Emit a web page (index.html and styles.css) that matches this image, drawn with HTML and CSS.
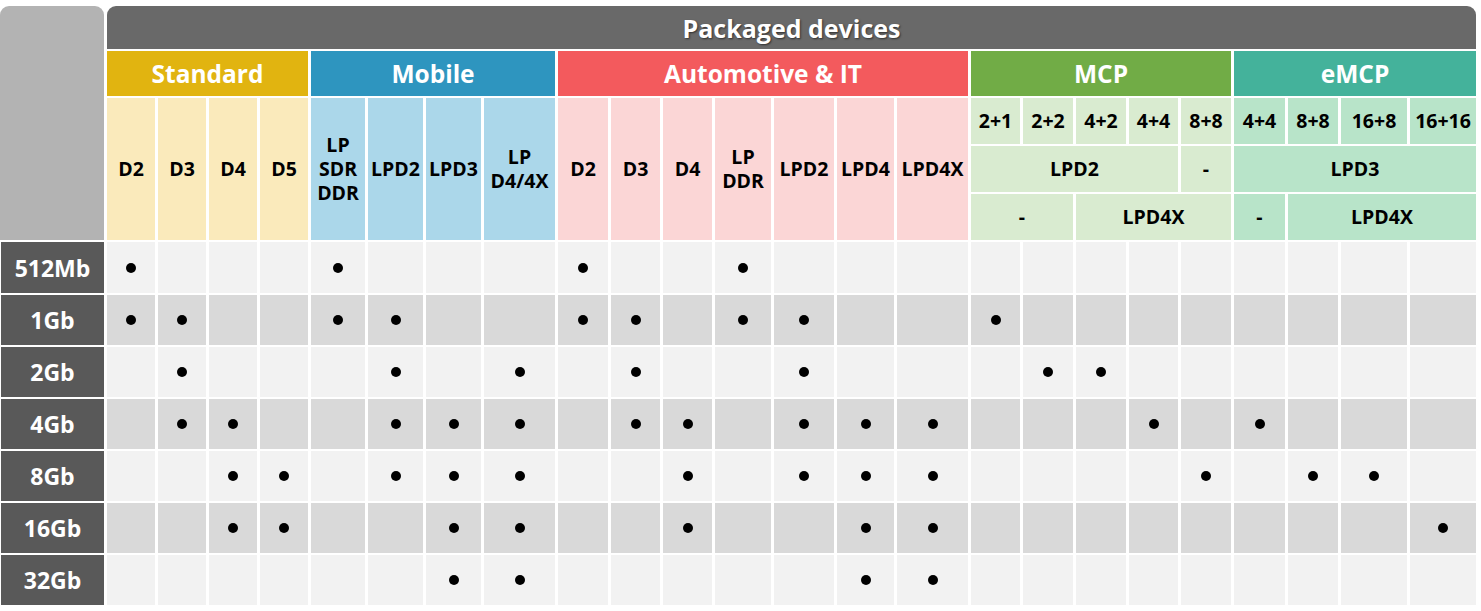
FILE: index.html
```html
<!DOCTYPE html>
<html lang="en">
<head>
<meta charset="utf-8">
<title>Packaged devices</title>
<link rel="stylesheet" href="styles.css">
</head>
<body>
<div class="chart">
  <div class="corner r5"></div>
  <div class="title s24">Packaged devices</div>

  <div class="cat std-h s4">Standard</div>
  <div class="cat mob-h s4">Mobile</div>
  <div class="cat aut-h s7">Automotive &amp; IT</div>
  <div class="cat mcp-h s5">MCP</div>
  <div class="cat emcp-h s4">eMCP</div>

  <div class="sub std r3">D2</div>
  <div class="sub std r3">D3</div>
  <div class="sub std r3">D4</div>
  <div class="sub std r3">D5</div>
  <div class="sub mob r3">LP<br>SDR<br>DDR</div>
  <div class="sub mob r3">LPD2</div>
  <div class="sub mob r3">LPD3</div>
  <div class="sub mob r3">LP<br>D4/4X</div>
  <div class="sub aut r3">D2</div>
  <div class="sub aut r3">D3</div>
  <div class="sub aut r3">D4</div>
  <div class="sub aut r3">LP<br>DDR</div>
  <div class="sub aut r3">LPD2</div>
  <div class="sub aut r3">LPD4</div>
  <div class="sub aut r3">LPD4X</div>
  <div class="sub mcp">2+1</div>
  <div class="sub mcp">2+2</div>
  <div class="sub mcp">4+2</div>
  <div class="sub mcp">4+4</div>
  <div class="sub mcp">8+8</div>
  <div class="sub emcp">4+4</div>
  <div class="sub emcp">8+8</div>
  <div class="sub emcp">16+8</div>
  <div class="sub emcp">16+16</div>

  <div class="sub mcp s4">LPD2</div>
  <div class="sub mcp">-</div>
  <div class="sub emcp s4">LPD3</div>

  <div class="sub mcp s2">-</div>
  <div class="sub mcp s3">LPD4X</div>
  <div class="sub emcp">-</div>
  <div class="sub emcp s3">LPD4X</div>

  <div class="row light">
    <div class="label">512Mb</div>
    <div class="c"><i class="dot"></i></div><div class="c"></div><div class="c"></div><div class="c"></div>
    <div class="c"><i class="dot"></i></div><div class="c"></div><div class="c"></div><div class="c"></div>
    <div class="c"><i class="dot"></i></div><div class="c"></div><div class="c"></div><div class="c"><i class="dot"></i></div><div class="c"></div><div class="c"></div><div class="c"></div>
    <div class="c"></div><div class="c"></div><div class="c"></div><div class="c"></div><div class="c"></div>
    <div class="c"></div><div class="c"></div><div class="c"></div><div class="c"></div>
  </div>

  <div class="row dark">
    <div class="label">1Gb</div>
    <div class="c"><i class="dot"></i></div><div class="c"><i class="dot"></i></div><div class="c"></div><div class="c"></div>
    <div class="c"><i class="dot"></i></div><div class="c"><i class="dot"></i></div><div class="c"></div><div class="c"></div>
    <div class="c"><i class="dot"></i></div><div class="c"><i class="dot"></i></div><div class="c"></div><div class="c"><i class="dot"></i></div><div class="c"><i class="dot"></i></div><div class="c"></div><div class="c"></div>
    <div class="c"><i class="dot"></i></div><div class="c"></div><div class="c"></div><div class="c"></div><div class="c"></div>
    <div class="c"></div><div class="c"></div><div class="c"></div><div class="c"></div>
  </div>

  <div class="row light">
    <div class="label">2Gb</div>
    <div class="c"></div><div class="c"><i class="dot"></i></div><div class="c"></div><div class="c"></div>
    <div class="c"></div><div class="c"><i class="dot"></i></div><div class="c"></div><div class="c"><i class="dot"></i></div>
    <div class="c"></div><div class="c"><i class="dot"></i></div><div class="c"></div><div class="c"></div><div class="c"><i class="dot"></i></div><div class="c"></div><div class="c"></div>
    <div class="c"></div><div class="c"><i class="dot"></i></div><div class="c"><i class="dot"></i></div><div class="c"></div><div class="c"></div>
    <div class="c"></div><div class="c"></div><div class="c"></div><div class="c"></div>
  </div>

  <div class="row dark">
    <div class="label">4Gb</div>
    <div class="c"></div><div class="c"><i class="dot"></i></div><div class="c"><i class="dot"></i></div><div class="c"></div>
    <div class="c"></div><div class="c"><i class="dot"></i></div><div class="c"><i class="dot"></i></div><div class="c"><i class="dot"></i></div>
    <div class="c"></div><div class="c"><i class="dot"></i></div><div class="c"><i class="dot"></i></div><div class="c"></div><div class="c"><i class="dot"></i></div><div class="c"><i class="dot"></i></div><div class="c"><i class="dot"></i></div>
    <div class="c"></div><div class="c"></div><div class="c"></div><div class="c"><i class="dot"></i></div><div class="c"></div>
    <div class="c"><i class="dot"></i></div><div class="c"></div><div class="c"></div><div class="c"></div>
  </div>

  <div class="row light">
    <div class="label">8Gb</div>
    <div class="c"></div><div class="c"></div><div class="c"><i class="dot"></i></div><div class="c"><i class="dot"></i></div>
    <div class="c"></div><div class="c"><i class="dot"></i></div><div class="c"><i class="dot"></i></div><div class="c"><i class="dot"></i></div>
    <div class="c"></div><div class="c"></div><div class="c"><i class="dot"></i></div><div class="c"></div><div class="c"><i class="dot"></i></div><div class="c"><i class="dot"></i></div><div class="c"><i class="dot"></i></div>
    <div class="c"></div><div class="c"></div><div class="c"></div><div class="c"></div><div class="c"><i class="dot"></i></div>
    <div class="c"></div><div class="c"><i class="dot"></i></div><div class="c"><i class="dot"></i></div><div class="c"></div>
  </div>

  <div class="row dark">
    <div class="label">16Gb</div>
    <div class="c"></div><div class="c"></div><div class="c"><i class="dot"></i></div><div class="c"><i class="dot"></i></div>
    <div class="c"></div><div class="c"></div><div class="c"><i class="dot"></i></div><div class="c"><i class="dot"></i></div>
    <div class="c"></div><div class="c"></div><div class="c"><i class="dot"></i></div><div class="c"></div><div class="c"></div><div class="c"><i class="dot"></i></div><div class="c"><i class="dot"></i></div>
    <div class="c"></div><div class="c"></div><div class="c"></div><div class="c"></div><div class="c"></div>
    <div class="c"></div><div class="c"></div><div class="c"></div><div class="c"><i class="dot"></i></div>
  </div>

  <div class="row light">
    <div class="label">32Gb</div>
    <div class="c"></div><div class="c"></div><div class="c"></div><div class="c"></div>
    <div class="c"></div><div class="c"></div><div class="c"><i class="dot"></i></div><div class="c"><i class="dot"></i></div>
    <div class="c"></div><div class="c"></div><div class="c"></div><div class="c"></div><div class="c"></div><div class="c"><i class="dot"></i></div><div class="c"><i class="dot"></i></div>
    <div class="c"></div><div class="c"></div><div class="c"></div><div class="c"></div><div class="c"></div>
    <div class="c"></div><div class="c"></div><div class="c"></div><div class="c"></div>
  </div>
</div>
</body>
</html>
```

FILE: styles.css
```css
html, body {
  margin: 0;
  padding: 0;
  background: #ffffff;
}

body {
  padding-top: 6px;
  font-family: "Open Sans", "DejaVu Sans", sans-serif;
  font-weight: 700;
}

.chart {
  display: grid;
  grid-template-columns:
    104px
    48px 48px 48px 48px
    54px 55px 55px 71px
    50px 49px 49px 56px 60px 57px 71px
    49px 50px 50px 49px 50px
    51px 50px 66px 66px;
  grid-template-rows: 43px 45px 46px 46px 46px 51px 50px 50px 50px 50px 50px 50px;
  column-gap: 3px;
  row-gap: 2px;
  width: 1476px;
}

.s2 { grid-column: span 2; }
.s3 { grid-column: span 3; }
.s4 { grid-column: span 4; }
.s5 { grid-column: span 5; }
.s7 { grid-column: span 7; }
.s24 { grid-column: span 24; }
.r3 { grid-row: span 3; }
.r5 { grid-row: span 5; }

.corner {
  background: #b3b3b3;
  border-radius: 9px 9px 0 0;
}

.title {
  background: #696969;
  border-radius: 9px 9px 0 0;
  color: #ffffff;
  font-size: 25px;
  display: flex;
  align-items: center;
  justify-content: center;
  text-shadow: 1px 1px 2px rgba(0, 0, 0, 0.55);
}

.cat {
  color: #ffffff;
  font-size: 24.5px;
  display: flex;
  align-items: center;
  justify-content: center;
}

.std-h { background: #e1b410; }
.mob-h { background: #2e95bf; }
.aut-h { background: #f35a5d; }
.mcp-h { background: #71ac46; }
.emcp-h { background: #44b29b; }

.sub {
  color: #000000;
  font-size: 19.5px;
  line-height: 24px;
  display: flex;
  align-items: center;
  justify-content: center;
  text-align: center;
}

.std { background: #faeabb; }
.mob { background: #abd7ea; }
.aut { background: #fbd6d6; }
.mcp { background: #d9ebd0; }
.emcp { background: #b8e4c9; }

.row {
  display: contents;
}

.label {
  background: #595959;
  color: #ffffff;
  font-size: 23px;
  margin-left: 1px;
  display: flex;
  align-items: center;
  justify-content: center;
}

.c {
  display: flex;
  align-items: center;
  justify-content: center;
}

.light > .c { background: #f2f2f2; }
.dark > .c { background: #d9d9d9; }

.dot {
  width: 10px;
  height: 10px;
  border-radius: 50%;
  background: #000000;
}
```
